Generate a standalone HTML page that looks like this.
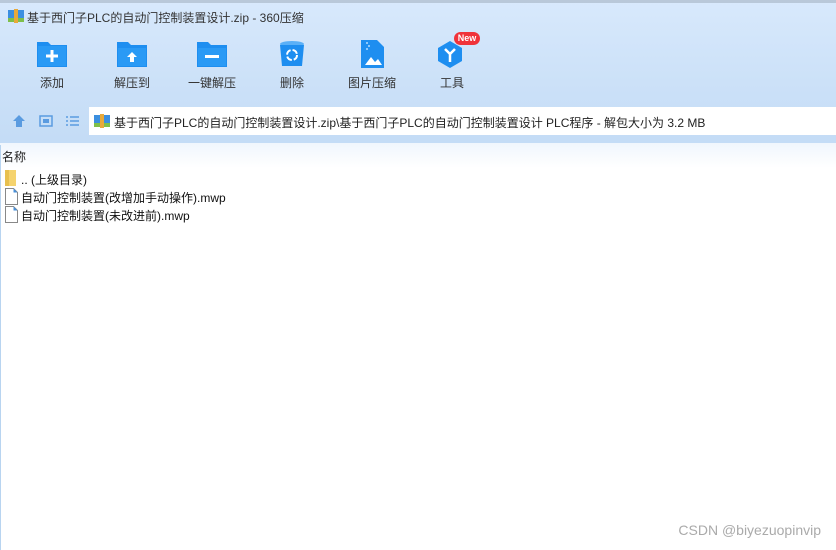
<!DOCTYPE html>
<html><head><meta charset="utf-8"><style>
*{margin:0;padding:0;box-sizing:border-box}
body{width:836px;height:550px;overflow:hidden;background:#fff;font-family:"Liberation Sans","Noto Sans CJK SC",sans-serif;position:relative}
.top{position:absolute;left:0;top:0;width:836px;height:145px;background:linear-gradient(#d8e9fc,#cfe3f9 60px,#c4dcf6 140px)}
.top:before{content:"";position:absolute;left:0;top:0;width:836px;height:3px;background:#9aa8b6;opacity:.5}
.title{position:absolute;left:27px;top:9px;font-size:12px;color:#333}
.tb{position:absolute;top:40px;width:80px;text-align:center;font-size:12px;color:#333}
.tb svg{display:block;margin:0 auto 6px}
.addr{position:absolute;left:89px;top:107px;width:747px;height:28px;background:#fff;font-size:12px;color:#222;padding:7px 0 0 25px}
.hdr{position:absolute;left:0;top:143px;width:836px;height:25px;background:linear-gradient(#f0f6fd,#fff);font-size:12px;color:#222;padding:5px 0 0 2px}
.row{position:absolute;left:5px;font-size:12px;color:#111}
.leftline{position:absolute;left:0;top:145px;width:1px;height:405px;background:#b8d4f0}
.wm{position:absolute;right:15px;top:522px;font-size:14px;color:#aaa}
</style></head><body>
<div class="top"></div>
<svg style="position:absolute;left:8px;top:9px" width="16" height="14"><rect x="0" y="1" width="16" height="12" fill="#3b8fe0"/><rect x="0" y="9" width="16" height="4" fill="#7fbf4a"/><rect x="6" y="0" width="4" height="14" fill="#e8a93a"/></svg>
<div class="title">基于西门子PLC的自动门控制装置设计.zip - 360压缩</div>
<div class="tb" style="left:12px"><svg width="32" height="28"><path d="M1 2h11l3 3h16v22H1z" fill="#1e8ef0"/><rect x="2" y="6" width="28" height="20" fill="#2a9af5"/><path d="M16 10v12M10 16h12" stroke="#fff" stroke-width="3"/></svg>添加</div>
<div class="tb" style="left:92px"><svg width="32" height="28"><path d="M1 2h11l3 3h16v22H1z" fill="#1e8ef0"/><rect x="2" y="8" width="28" height="18" fill="#2a9af5"/><path d="M16 12l-5 5h3v5h4v-5h3z" fill="#fff"/></svg>解压到</div>
<div class="tb" style="left:172px"><svg width="32" height="28"><path d="M1 2h11l3 3h16v22H1z" fill="#1e8ef0"/><rect x="2" y="8" width="28" height="18" fill="#2a9af5"/><rect x="9" y="15" width="14" height="3" fill="#fff"/></svg>一键解压</div>
<div class="tb" style="left:252px"><svg width="32" height="28"><ellipse cx="16" cy="4" rx="12" ry="3" fill="#5ab0f7"/><path d="M4 5l2 21h20l2-21z" fill="#1e8ef0"/><circle cx="16" cy="15" r="5" fill="none" stroke="#fff" stroke-width="2" stroke-dasharray="6 2"/></svg>删除</div>
<div class="tb" style="left:332px"><svg width="32" height="28"><path d="M5 0h16l7 7v21H5z" fill="#1e8ef0"/><path d="M9 25l6-8 4 5 3-3 4 6z" fill="#fff"/><path d="M10 2h2v2h-2zM12 5h2v2h-2zM10 8h2v2h-2z" fill="#8cc8fb"/></svg>图片压缩</div>
<div class="tb" style="left:412px"><svg width="32" height="28"><path d="M14 1l12 7v13l-12 7-12-7V8z" fill="#1e8ef0"/><path d="M9 9l5 5 5-5M14 14v8" stroke="#fff" stroke-width="2.5" fill="none"/></svg>工具</div>
<div style="position:absolute;left:454px;top:32px;width:26px;height:13px;border-radius:7px;background:#f0333a;color:#fff;font-size:9px;font-weight:bold;text-align:center;line-height:13px">New</div>
<svg style="position:absolute;left:12px;top:114px" width="70" height="14"><path d="M7 1l6 6h-3v6H4V7H1z" fill="#5a9be0"/><rect x="28" y="2" width="12" height="10" fill="none" stroke="#5a9be0" stroke-width="1.5"/><rect x="31" y="5" width="6" height="4" fill="#5a9be0"/><path d="M54 3h2M54 7h2M54 11h2M58 3h9M58 7h9M58 11h9" stroke="#5a9be0" stroke-width="1.6"/></svg>
<div class="addr">基于西门子PLC的自动门控制装置设计.zip\基于西门子PLC的自动门控制装置设计 PLC程序 - 解包大小为 3.2 MB</div>
<svg style="position:absolute;left:94px;top:114px" width="16" height="14"><rect x="0" y="1" width="16" height="12" fill="#3b8fe0"/><rect x="0" y="9" width="16" height="4" fill="#7fbf4a"/><rect x="6" y="0" width="4" height="14" fill="#e8a93a"/></svg>
<div class="hdr">名称</div>
<div class="leftline"></div>
<svg style="position:absolute;left:5px;top:170px" width="12" height="16"><rect x="0" y="0" width="11" height="16" fill="#f5d36e"/><rect x="0" y="0" width="4" height="16" fill="#e8c04f"/></svg>
<div class="row" style="left:21px;top:171px">.. (上级目录)</div>
<svg style="position:absolute;left:5px;top:188px" width="13" height="17"><path d="M.5.5h8l4 4v12H.5z" fill="#fff" stroke="#888"/><path d="M8.5.5v4h4" fill="#4a90d9"/></svg>
<div class="row" style="left:21px;top:189px">自动门控制装置(改增加手动操作).mwp</div>
<svg style="position:absolute;left:5px;top:206px" width="13" height="17"><path d="M.5.5h8l4 4v12H.5z" fill="#fff" stroke="#888"/><path d="M8.5.5v4h4" fill="#4a90d9"/></svg>
<div class="row" style="left:21px;top:207px">自动门控制装置(未改进前).mwp</div>
<div class="wm">CSDN @biyezuopinvip</div>
</body></html>
